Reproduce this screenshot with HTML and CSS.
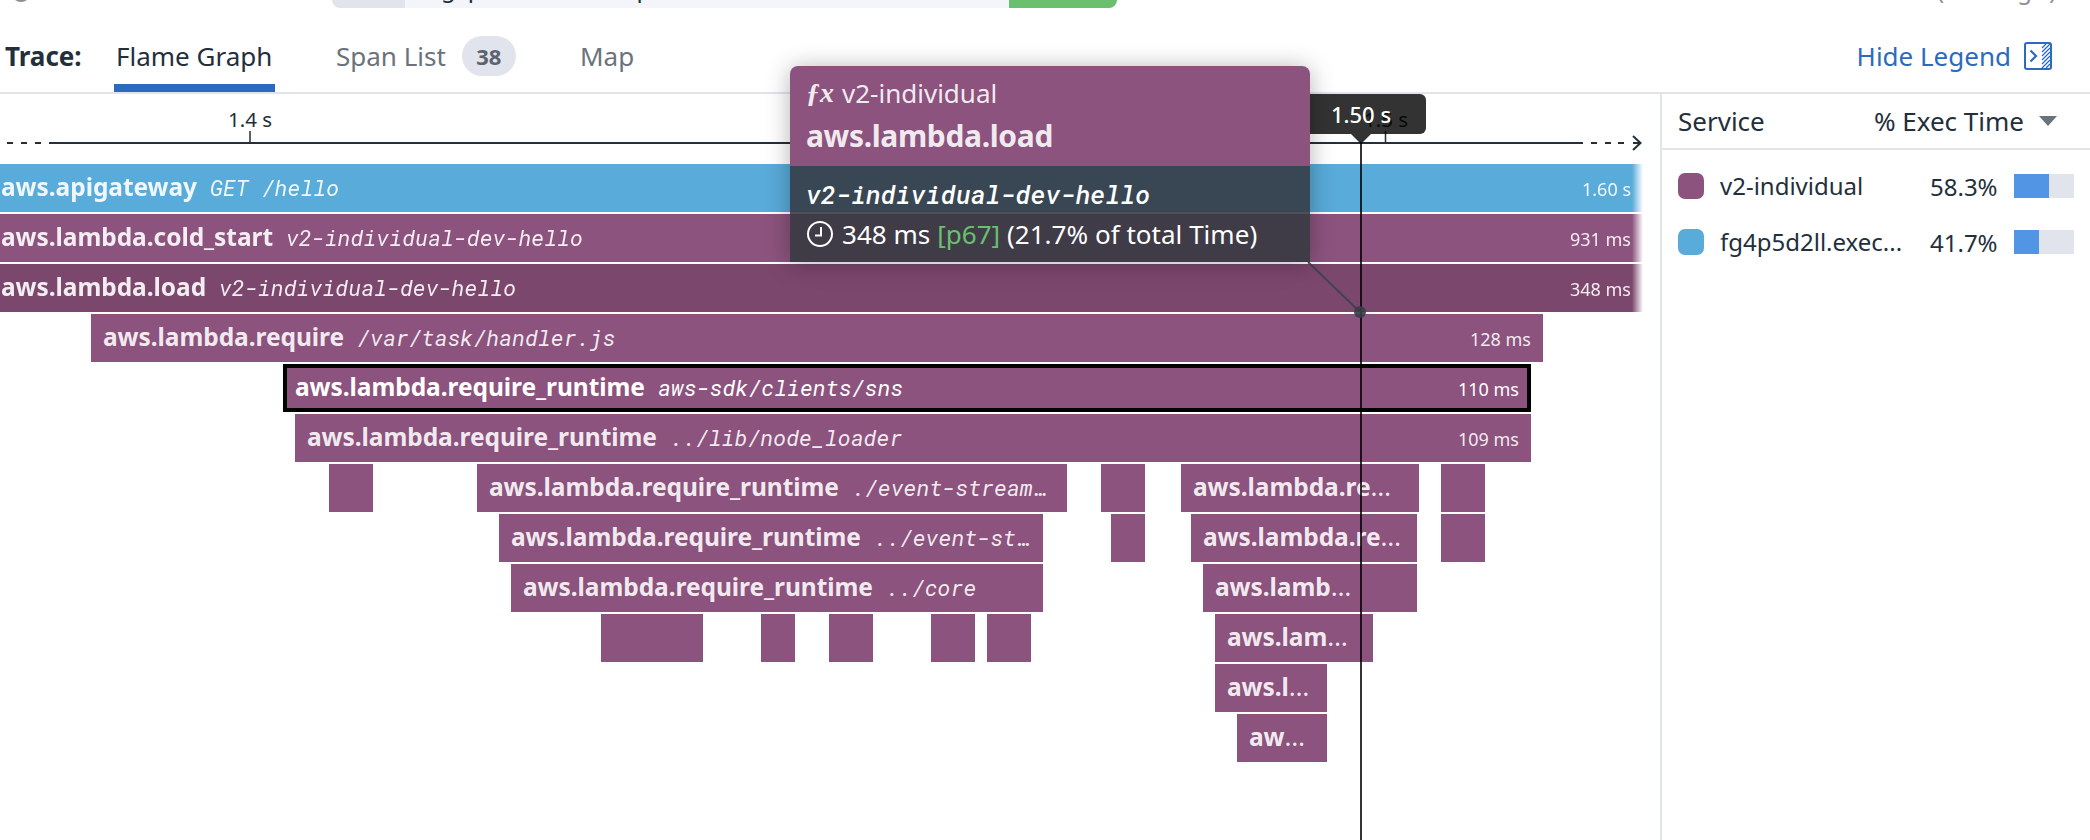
FILE: index.html
```html
<!DOCTYPE html>
<html lang="en">
<head>
<meta charset="utf-8">
<title>Trace flame graph</title>
<link rel="stylesheet" href="styles.css">
</head>
<body>
<div class="page">
  <div class="topbar">
    <span class="status-dot"></span>
    <div class="resource">
      <span class="resource-method"></span>
      <span class="resource-path"><span>g</span><span class="p1">p</span><span class="p2">p</span></span>
      <span class="resource-code"></span>
    </div>
    <span class="ago">(<i></i>g<b></b>)</span>
  </div>

  <div class="tabs">
    <strong class="tabs-title">Trace:</strong>
    <a class="tab tab-active">Flame Graph</a>
    <a class="tab tab-spans">Span List <span class="count">38</span></a>
    <a class="tab">Map</a>
    <a class="hide-legend">Hide Legend
      <svg class="legend-icon" width="28" height="28" viewBox="0 0 28 28" fill="none" stroke="#2c6abf">
        <rect x="1" y="1" width="26" height="26" rx="2" stroke-width="2"/>
        <path d="M6.500 8.500l5.500 5.500-5.500 5.500" stroke-width="2.200"/>
        <path d="M18 6l4-4M18 10l8-8M18 14l8-8M18 18l8-8M18 22l8-8M18 26l8-8M22 26l4-4" stroke-width="1.200"/>
      </svg>
    </a>
  </div>

  <div class="content">
    <div class="chart">
      <div class="axis">
        <svg width="1660" height="70" viewBox="0 0 1660 70" stroke="#232f3b">
          <path d="M7 49h6M21 49h6M35 49h6M49 49H1583M1591 49h6M1605 49h6M1618 49h6M1633 49h8" stroke-width="2"/>
          <path d="M1633 42l7.500 7-7.500 7" fill="none" stroke-width="2"/>
          <path d="M250 37v12M1385.500 37v12" stroke-width="1.500"/>
        </svg>
        <span class="tick tick-a">1.4 s</span>
        <span class="tick tick-b">1.5 s</span>
      </div>
      <div class="flame">
        <div class="row fade"><div class="span api" style="width:1643px"><b>aws.apigateway</b><em>GET /hello</em><small>1.60 s</small></div></div>
        <div class="row fade"><div class="span cut" style="width:1643px"><b>aws.lambda.cold_start</b><em>v2-individual-dev-hello</em><small>931 ms</small></div></div>
        <div class="row fade"><div class="span cut hovered" style="width:1643px"><b>aws.lambda.load</b><em>v2-individual-dev-hello</em><small>348 ms</small></div></div>
        <div class="row"><div class="span" style="margin-left:91px;width:1452px"><b>aws.lambda.require</b><em>/var/task/handler.js</em><small>128 ms</small></div></div>
        <div class="row"><div class="span selected" style="margin-left:283px;width:1248px"><b>aws.lambda.require_runtime</b><em>aws-sdk/clients/sns</em><small>110 ms</small></div></div>
        <div class="row"><div class="span" style="margin-left:295px;width:1236px"><b>aws.lambda.require_runtime</b><em>../lib/node_loader</em><small>109 ms</small></div></div>
        <div class="row">
          <div class="span" style="margin-left:329px;width:44px"></div>
          <div class="span" style="margin-left:104px;width:590px"><b>aws.lambda.require_runtime</b><em>./event-stream…</em></div>
          <div class="span" style="margin-left:34px;width:44px"></div>
          <div class="span" style="margin-left:36px;width:238px"><b>aws.lambda.re<i>…</i></b></div>
          <div class="span" style="margin-left:22px;width:44px"></div>
        </div>
        <div class="row">
          <div class="span" style="margin-left:499px;width:544px"><b>aws.lambda.require_runtime</b><em>../event-st…</em></div>
          <div class="span" style="margin-left:68px;width:34px"></div>
          <div class="span" style="margin-left:46px;width:226px"><b>aws.lambda.re<i>…</i></b></div>
          <div class="span" style="margin-left:24px;width:44px"></div>
        </div>
        <div class="row">
          <div class="span" style="margin-left:511px;width:532px"><b>aws.lambda.require_runtime</b><em>../core</em></div>
          <div class="span" style="margin-left:160px;width:214px"><b>aws.lamb<i>…</i></b></div>
        </div>
        <div class="row">
          <div class="span" style="margin-left:601px;width:102px"></div>
          <div class="span" style="margin-left:58px;width:34px"></div>
          <div class="span" style="margin-left:34px;width:44px"></div>
          <div class="span" style="margin-left:58px;width:44px"></div>
          <div class="span" style="margin-left:12px;width:44px"></div>
          <div class="span" style="margin-left:184px;width:158px"><b>aws.lam<i>…</i></b></div>
        </div>
        <div class="row"><div class="span" style="margin-left:1215px;width:112px"><b>aws.l<i>…</i></b></div></div>
        <div class="row"><div class="span" style="margin-left:1237px;width:90px"><b>aw<i>…</i></b></div></div>
      </div>
    </div>

    <aside class="legend">
      <div class="legend-head">
        <span>Service</span>
        <span class="sort">% Exec Time <i class="caret"></i></span>
      </div>
      <div class="legend-row">
        <i class="swatch"></i><span class="service">v2-individual</span><span class="pct">58.3%</span>
        <span class="meter"><i style="width:58.3%"></i></span>
      </div>
      <div class="legend-row">
        <i class="swatch swatch-api"></i><span class="service">fg4p5d2ll.exec...</span><span class="pct">41.7%</span>
        <span class="meter"><i style="width:41.7%"></i></span>
      </div>
    </aside>
  </div>

  <div class="cursor-line"></div>
  <div class="cursor-label">1.50 s</div>
  <svg class="connector" width="70" height="70" viewBox="0 0 70 70">
    <path d="M8 12L60 62" stroke="#3c424d" stroke-width="2" stroke-opacity=".9"/>
    <circle cx="60" cy="62" r="6" fill="#383d48" fill-opacity=".9"/>
  </svg>
  <div class="tooltip">
    <div class="tooltip-head">
      <div class="tooltip-service">
        <span class="fx">ƒx</span>v2-individual
      </div>
      <div class="tooltip-name">aws.lambda.load</div>
    </div>
    <div class="tooltip-body">
      <div class="tooltip-resource">v2-individual-dev-hello</div>
      <div class="tooltip-time">
        <svg width="28" height="28" viewBox="0 0 28 28" fill="none" stroke="#fff" stroke-width="2">
          <circle cx="14" cy="14" r="12"/><path d="M15 7v8.500H9"/>
        </svg>
        <span>348 ms <span class="p67">[p67]</span> (21.7% of total Time)</span>
      </div>
    </div>
  </div>
</div>
</body>
</html>
```
FILE: styles.css
```css
* { box-sizing: border-box; }
body { margin: 0; background: #fff; font-family: "Noto Sans", sans-serif; color: #232f3b; }
i { font-style: normal; }
.page { position: relative; width: 2090px; height: 840px; overflow: hidden; white-space: nowrap; }

.topbar { display: flex; height: 22px; align-items: flex-start; overflow: hidden; }
.status-dot { width: 20px; height: 20px; margin: -18px 0 0 11px; border-radius: 50%; background: #8c8f94; }
.resource { display: flex; width: 785px; height: 8px; margin-left: 301px; border-radius: 0 0 8px 8px; overflow: hidden; }
.resource-method { width: 73px; background: #e1e4ed; }
.resource-path { display: flex; align-items: flex-start; width: 604px; padding-left: 36px; background: #f4f5fa; font-size: 24px; line-height: 34px; }
.resource-path span { margin-top: -29px; }
.resource-path .p1 { margin-left: 12px; }
.resource-path .p2 { margin-left: 154px; }
.resource-code { flex: 1; background: #6ac06f; }
.ago { margin: -27px 0 0 820px; font-size: 24px; line-height: 34px; color: #8b9096; }
.ago i { display: inline-block; width: 73px; }
.ago b { display: inline-block; width: 17px; }

.tabs { display: flex; align-items: center; height: 72px; padding: 0 38px 0 5px; border-bottom: 2px solid #e1e4ea; font-size: 26px; line-height: 36px; }
.tabs-title { width: 109px; padding-bottom: 2px; }
.tab { display: flex; align-items: center; height: 70px; padding-bottom: 2px; color: #6a727b; }
.tab-active { width: 161px; padding: 0 2px 2px; color: #232f3b; box-shadow: inset 0 -8px #2c6abf; }
.tab-spans { width: 244px; margin-left: 61px; }
.count { width: 54px; height: 40px; margin-left: 16px; border-radius: 20px; background: #e1e4ed; color: #5b636e; font-size: 22px; font-weight: 700; line-height: 41px; text-align: center; }
.hide-legend { display: flex; align-items: center; margin-left: auto; padding-bottom: 2px; color: #2c6abf; }
.legend-icon { margin-left: 13px; }

.content { display: flex; height: 746px; }
.chart { width: 1660px; }
.axis { position: relative; height: 70px; }
.axis svg { display: block; }
.tick { position: absolute; top: 11px; width: 80px; font-size: 20.500px; line-height: 28px; text-align: center; }
.tick-a { left: 210px; }
.tick-b { left: 1346px; }

.flame { display: flex; flex-direction: column; gap: 2px; }
.row { display: flex; height: 48px; }
.fade { width: 1643px; -webkit-mask-image: linear-gradient(to left, transparent, #000 11px); mask-image: linear-gradient(to left, transparent, #000 11px); }
.span { display: flex; flex: none; align-items: baseline; padding: 1px 12px 0; background: #8c537e; color: rgba(255, 255, 255, .9); line-height: 44px; overflow: hidden; }
.span b { font-size: 24.500px; font-weight: 700; letter-spacing: -.06px; }
.span b i { font-size: 26px; font-weight: 400; line-height: 40px; }
.span em { margin-left: 13px; font: italic 22px/44px "Roboto Mono", "DejaVu Sans Mono", monospace; }
.span small { margin-left: auto; font-size: 18px; line-height: 44px; }
.api { padding-left: 1px; background: #59abd9; }
.cut { padding-left: 1px; }
.hovered { background: #7c476d; }
.selected { border: 4px solid #000; padding: 1px 8px 0; color: #fff; line-height: 36px; }
.selected em, .selected small { line-height: 36px; }

.legend { width: 430px; border-left: 2px solid #e1e4ea; }
.legend-head { display: flex; justify-content: space-between; align-items: center; height: 56px; padding: 0 33px 0 16px; border-bottom: 2px solid #e1e4ea; font-size: 26px; }
.sort { display: flex; align-items: center; }
.caret { margin-left: 15px; border: 9px solid transparent; border-top: 10px solid #6a727b; border-bottom: 0; }
.legend-row { display: flex; align-items: center; height: 56px; padding: 0 16px; font-size: 24px; }
.legend-head + .legend-row { margin-top: 8px; }
.swatch { width: 26px; height: 26px; margin-right: 16px; border-radius: 7px; background: #8c537e; }
.swatch-api { background: #59abd9; }
.service { width: 193px; padding-bottom: 2px; }
.pct { width: 85px; padding-left: 17px; }
.meter { width: 60px; height: 24px; margin-left: auto; background: #e1e4ed; }
.meter i { display: block; height: 100%; background: #5295e5; }

.cursor-line { position: absolute; left: 1360px; top: 143px; width: 2px; height: 697px; background: rgba(0, 0, 0, .8); }
.cursor-label { position: absolute; left: 1296px; top: 94px; width: 130px; height: 40px; border-radius: 6px; background: rgba(0, 0, 0, .8); color: #fff; font-size: 22px; font-weight: 500; line-height: 41px; text-align: center; }
.cursor-label::after { content: ""; position: absolute; left: 55px; top: 40px; border: 10px solid transparent; border-top-color: rgba(0, 0, 0, .8); border-bottom: 0; }
.connector { position: absolute; left: 1300px; top: 250px; }

.tooltip { position: absolute; left: 790px; top: 66px; width: 520px; height: 196px; border-radius: 8px 8px 0 0; box-shadow: 0 2px 24px rgba(0, 0, 0, .3); color: #fff; }
.tooltip-head { height: 100px; padding: 8px 16px; border-radius: 8px 8px 0 0; background: #8c537e; color: rgba(255, 255, 255, .9); }
.tooltip-service { display: flex; font-size: 26px; line-height: 38px; }
.fx { width: 36px; font: italic bold 28px/37px "Liberation Serif", serif; }
.tooltip-name { font-size: 30px; font-weight: 700; letter-spacing: -.35px; line-height: 48px; }
.tooltip-body { height: 96px; padding: 8px 16px; background: rgba(52, 56, 64, .88); }
.tooltip-resource { margin-bottom: 1px; font: italic 500 25.500px/40px "Roboto Mono", "DejaVu Sans Mono", monospace; }
.tooltip-time { display: flex; align-items: center; font-size: 26px; line-height: 38px; letter-spacing: .03px; }
.tooltip-time svg { margin-right: 8px; }
.p67 { color: #6ac06f; }
```
